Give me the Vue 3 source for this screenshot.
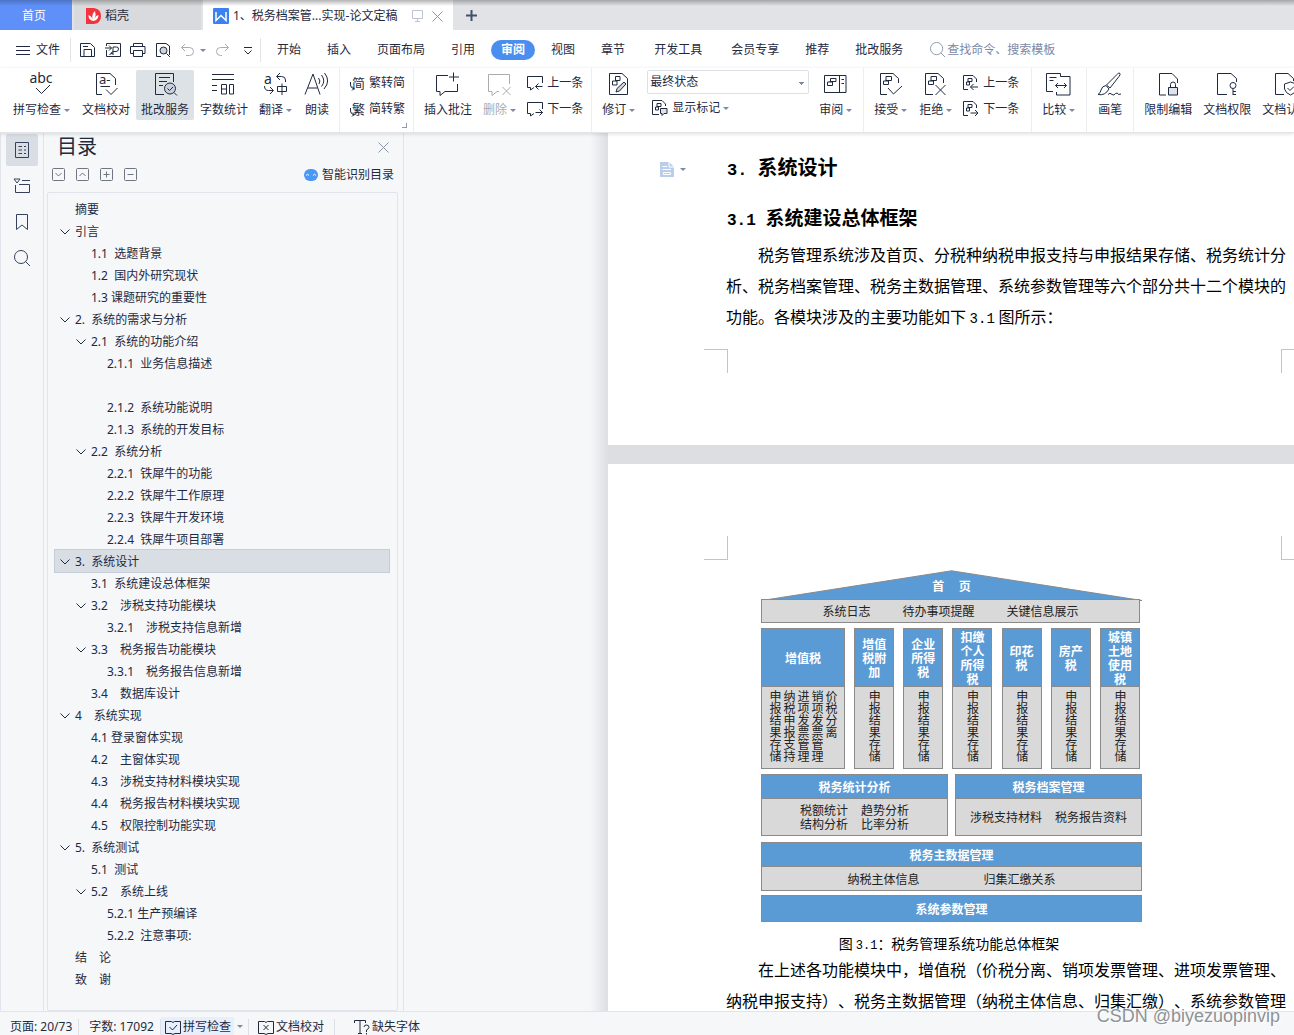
<script setup>
import { ref } from 'vue'

const doc = '<path d="M11 25H4.500V3.500H17L22.500 9V13"/>'
const pageLines = '<path d="M8.500 11.500H15.500V7.500H10.500V11.500M7.500 12H12.500V15.500H7.500Z"/>'

const icons = {
  spell: '<text x="12" y="13" text-anchor="middle" font-size="14" fill="currentColor" stroke="none">abc</text><path d="M7 18L12.500 23.500L21 15"/>',
  proof: '<path d="M9 24.500H3.500V3.500H17L22.500 8.500V15M7.500 16.500H17M13 19.500L18 24.500L24.500 18"/><text x="6" y="14" font-size="13" fill="currentColor" stroke="none">a-</text>',
  service: '<path d="M12 24.500H3.500V3.500H21.500V12M7 7.500H18M7 11.500H15M7 15.500H11"/><circle cx="18" cy="18.500" r="5.500" fill="#c9d0da"/><path d="M22 22.500L25 25.500M15.500 18.500L17.500 20.500L21 17"/>',
  count: '<path d="M1 4.500H23M1 9.500H23M1 15.500H6M1 20.500H6M10.500 14.500H15.500V24H10.500ZM10.500 19H15.500M18.500 14.500H22.500V24H18.500Z"/>',
  translate: '<text x="1" y="14" font-size="14" fill="currentColor" stroke="none">a</text><path d="M17 3L13.500 6.500L17 10M14 6.500H18.500Q22.500 6.500 22.500 10V12M1.500 16Q1.500 20.500 5.500 20.500H10M7 17L10.500 20.500L7 24M14.500 16.500H23.500V21.500H14.500ZM19 13.500V25"/>',
  read: '<path d="M1 24.500L9 4L16 24.500M4 18H13.500M14.500 8Q17 11 15 14M17.500 5Q22 11 17.500 16.500M20.500 3Q27 11 20 19"/>',
  addNote: '<path d="M13 5.500H1.500V21.500H5V25.500L10 21.500H22.500V14M18.500 2.500V11.500M14 7H24"/>',
  delNote: '<path d="M12 21.500H10L5 25.500V21.500H1.500V4.500H22.500V14M15.500 17L23.500 25M23.500 17L15.500 25"/>',
  revise: '<path d="M3.500 3.500H16L21.500 8.500V24.500H3.500Z"/><path d="M9 10.500H14V6.500H9.500V10.500M6.500 11H11V15H6.500Z"/><path d="M10 22L11 18.500L18 12L20 14L13.500 21Z" fill="#cfd3da"/>',
  review: '<path d="M1.500 5.500H23V22.500H1.500ZM16.500 5.500V22.500M6.500 11.500H13V8.500H7.500V11.500M4.500 12H9.500V15.500H4.500ZM18.500 9.500H21M18.500 13.500H21"/>',
  accept: '<path d="M9 24.500H2.500V3.500H15L20.500 8.500V13M10 18L15.500 24L24 16"/>' + '<path d="M7.500 10.500H13.500V6.500H8V10.500M5.500 11H10.500V14.500H5.500Z"/>',
  reject: '<path d="M10 24.500H2.500V3.500H15L20.500 8.500V13M12.500 15L22.500 25M22.500 15L12.500 25"/>' + '<path d="M7.500 10.500H13.500V6.500H8V10.500M5.500 11H10.500V14.500H5.500Z"/>',
  compare: '<path d="M7 21.500H.5V3.500H14.500V6.500H24V25H10.500V22M3.500 7.500H10.500M3.500 10.500H7.500M9.500 15.500H20.500M12 13L9.500 15.500L12 18M18 13L20.500 15.500L18 18"/>',
  pen: '<path d="M22.500 3Q24 4 22 6.500L13 18L9.500 15L20 4.500Q21.500 2.500 22.500 3ZM9 15.500Q5 16 4 20Q3.500 23 1 24.500Q8 26 12 19ZM11 24.500Q13 22 15 24.500Q17 26 18.500 23.500Q20.500 22 21.500 24.500L24 24"/>',
  lock: doc + '<path d="M13.500 17.500H22.500V25H13.500Z" fill="#dfe2e8"/><path d="M15.500 17V14.500Q15.500 12 18 12Q20.500 12 20.500 14.500V17"/>',
  key: '<path d="M13 24.500H3.500V3.500H17L22.500 8.500V12"/><circle cx="19" cy="15.500" r="3"/><path d="M19 18.500V25M19 21.500H22M19 24.500H22"/>',
  shield: '<path d="M11 24.500H2.500V3.500H15L20.500 8.500V11M17.500 12L23.500 14V19Q22 23.500 17.500 25Q13 23.500 11.500 19V14ZM14.500 18L17 20.500L21 16.500"/>',
  toSimple: '<text x="3" y="13" font-size="13" fill="currentColor" stroke="none">简</text><path d="M1.500 7V9Q1.500 13.500 5 13.500M3 11.500L5 13.500L3 15.500"/>',
  toTrad: '<text x="3" y="13" font-size="13" fill="currentColor" stroke="none">繁</text><path d="M1.500 7V9Q1.500 13.500 5 13.500M3 11.500L5 13.500L3 15.500"/>',
  prevNote: '<path d="M7 12.500L3.500 15V12.500H.5V1.500H15.500V8M8.500 11.500H15.500M11.500 8.500L8.500 11.500L11.500 14.500"/>',
  nextNote: '<path d="M7 12.500L3.500 15V12.500H.5V1.500H15.500V8M8.500 11.500H15.500M12.500 8.500L15.500 11.500L12.500 14.500"/>',
  prevEdit: '<path d="M5 14.500H.5V.5H10L13.500 4V7M4.500 6.500H9V3.500H5V6.500M3.500 7H6.500V10H3.500ZM7.500 12H15M10.500 9L7.500 12L10.500 15"/>',
  nextEdit: '<path d="M5 14.500H.5V.5H10L13.500 4V7M4.500 6.500H9V3.500H5V6.500M3.500 7H6.500V10H3.500ZM7.500 12H15M12 9L15 12L12 15"/>',
  marks: '<path d="M7 14.500H.5V.5H10L13.500 4V6M4.500 6.500H9V3.500H5V6.500M3.500 7H6.500V10H3.500Z"/><path d="M8.500 8.500H15V13.500H12L10 15.500V13.500H8.500Z" fill="#dfe2e8"/>',
  save: '<path d="M.5 1.500H10.500L14.500 5.500V14.500H.5ZM4 14.500V7.500H11.500V14.500M3 4.500H8"/>',
  output: '<path d="M1.500 4V1.500H15.500V14.500H1.500V8M0 6H6.500M4 3.500L6.500 6L4 8.500M4.500 12.500L8 11M8 13V5H11.500Q13.500 5 13.500 7Q13.500 9.500 11 9.500Q6 9 6 12"/>',
  print: '<path d="M3.500 4.500V1.500H12.500V4.500M3.500 11.500H.5V4.500H15V11.500H12.500M3.500 8.500H12.500V14.500H3.500Z"/>',
  preview: '<path d="M6 14.500H1.500V1.500H11L14.500 4V13"/><circle cx="8.500" cy="8.500" r="3.500" fill="#cfd3da"/><path d="M11.500 11.500L15 15"/>',
  undo: '<path d="M5 2L1.500 5.500L5 9M2 5.500H9.500Q13.500 5.500 13.500 9.500Q13.500 13.500 9.500 13.500H6"/>',
  redo: '<path d="M10 2L13.500 5.500L10 9M13 5.500H5.500Q1.500 5.500 1.500 9.500Q1.500 13.500 5.500 13.500H7"/>',
  more: '<path d="M4 5.500H12M4.500 8.500L8 12L11.500 8.500"/>',
  outline: '<path d="M1.500.5H14.500V15.500H1.500ZM4.500 4.500H8M4.500 8H8M4.500 11.500H8M10 4.500H12M10 8H12M10 11.500H12"/>',
  chapters: '<path d="M0 1H6L3 5ZM8 2.500H16M1.500 7V14.500H15.500V6.500H5"/>',
  bookmark: '<path d="M2.500.5H13.500V15.500L8 11L2.500 15.500Z"/>',
  find: '<circle cx="7" cy="7" r="6.500"/><path d="M11.500 11.500L16 16"/>',
  checkBook: '<path d="M6 14.500H.5V2.500H6.500L8 3.500L9.500 2.500H15.500V14.500H10L8 15.500ZM4.500 8L7.500 11L12 6"/>',
  crossBook: '<path d="M6 14.500H.5V2.500H6.500L8 3.500L9.500 2.500H15.500V14.500H10L8 15.500ZM5.500 6L10.500 11M10.500 6L5.500 11"/>',
  fontMissing: '<path d="M.5 4V1.500H11.500V4M6 1.500V14.500M4 14.500H8M10 8Q10 6 12.500 6Q15 6 15 8.500Q14.500 10 12.500 11V13M12.500 14V15.500"/>'
}

const quick = [['save', '保存'], ['output', '输出为PDF'], ['print', '打印'], ['preview', '打印预览']]
const menus = ['开始', '插入', '页面布局', '引用', '审阅', '视图', '章节', '开发工具', '会员专享', '推荐', '批改服务']
const activeMenu = ref('审阅')

const ribbon = [
  { big: [['spell', '拼写检查', 'c'], ['proof', '文档校对'], ['service', '批改服务', 'on'], ['count', '字数统计'], ['translate', '翻译', 'c'], ['read', '朗读']] },
  { small: [['toSimple', '繁转简'], ['toTrad', '简转繁']], corner: true },
  { big: [['addNote', '插入批注'], ['delNote', '删除', 'c off']], small: [['prevNote', '上一条'], ['nextNote', '下一条']] },
  { big: [['revise', '修订', 'c']], state: true, after: [['review', '审阅', 'c']] },
  { big: [['accept', '接受', 'c'], ['reject', '拒绝', 'c']], small: [['prevEdit', '上一条'], ['nextEdit', '下一条']], wide: true },
  { big: [['compare', '比较', 'c']] },
  { big: [['pen', '画笔']] },
  { big: [['lock', '限制编辑'], ['key', '文档权限'], ['shield', '文档认证']] }
]

const side = [['outline', '目录'], ['chapters', '章节'], ['bookmark', '书签'], ['find', '查找']]
const treeTools = [['M3.500 5L6.500 8L9.500 5', '展开'], ['M3.500 8L6.500 5L9.500 8', '收起'], ['M3.500 6.500H9.500M6.500 3.500V9.500', '放大'], ['M3.500 6.500H9.500', '缩小']]

// [level, expandable, title]
const tree = [
  [1, 0, '摘要'], [1, 1, '引言'], [2, 0, '1.1  选题背景'], [2, 0, '1.2  国内外研究现状'],
  [2, 0, '1.3 课题研究的重要性'], [1, 1, '2.  系统的需求与分析'], [2, 1, '2.1  系统的功能介绍'],
  [3, 0, '2.1.1  业务信息描述'], [3, 0, ''], [3, 0, '2.1.2  系统功能说明'], [3, 0, '2.1.3  系统的开发目标'],
  [2, 1, '2.2  系统分析'], [3, 0, '2.2.1  铁犀牛的功能'], [3, 0, '2.2.2  铁犀牛工作原理'],
  [3, 0, '2.2.3  铁犀牛开发环境'], [3, 0, '2.2.4  铁犀牛项目部署'], [1, 1, '3.  系统设计'],
  [2, 0, '3.1  系统建设总体框架'], [2, 1, '3.2　涉税支持功能模块'], [3, 0, '3.2.1　涉税支持信息新增'],
  [2, 1, '3.3　税务报告功能模块'], [3, 0, '3.3.1　税务报告信息新增'], [2, 0, '3.4　数据库设计'],
  [1, 1, '4　系统实现'], [2, 0, '4.1 登录窗体实现'], [2, 0, '4.2　主窗体实现'],
  [2, 0, '4.3　涉税支持材料模块实现'], [2, 0, '4.4　税务报告材料模块实现'], [2, 0, '4.5　权限控制功能实现'],
  [1, 1, '5.  系统测试'], [2, 0, '5.1  测试'], [2, 1, '5.2　系统上线'],
  [3, 0, '5.2.1 生产预编译'], [3, 0, '5.2.2  注意事项:'], [1, 0, '结　论'], [1, 0, '致　谢']
]
const selected = ref(16)

const stored = ['申报结果存储']
const taxes = [
  { name: ['增值税'], items: ['价税分离', '销项发票管理', '进项发票管理', '纳税申报支持', '申报结果存储'], wide: true },
  { name: ['增值', '税附', '加'], items: stored },
  { name: ['企业', '所得', '税'], items: stored },
  { name: ['扣缴', '个人', '所得', '税'], items: stored },
  { name: ['印花', '税'], items: stored },
  { name: ['房产', '税'], items: stored },
  { name: ['城镇', '土地', '使用', '税'], items: stored }
]
</script>

<template>
  <div class="app">
    <header class="tabs">
      <button class="tab home">首页</button>
      <button class="tab docer">
        <svg width="15" height="16" viewBox="0 0 15 16"><path d="M0 0H8Q15 1 15 8Q15 15 8 16H0Z" fill="#f5333f" stroke="none" /><path d="M7.500 13Q2 12 2.500 7Q5.500 8 6.500 11Q5.500 6 9 3Q10.500 7 8.500 11Q9.500 7.500 12.500 7Q12.500 12 7.500 13Z" fill="#fff" stroke="none" /></svg>
        稻壳
      </button>
      <div class="tab current">
        <svg width="16" height="16" viewBox="0 0 16 16"><rect width="16" height="16" rx="1" fill="#3b82f0" stroke="none" /><path d="M3 4V12.500L8 7.500L13 12.500V4" fill="none" stroke="#fff" stroke-width="1.500" /></svg>
        <span class="tab-title">1、税务档案管...实现-论文定稿</span>
        <svg class="faint" width="13" height="12" viewBox="0 0 13 12"><path d="M1.500.5H11.500V8.500H1.500ZM6.500 8.500V11M4 11.500H9" /></svg>
        <button class="plain" aria-label="关闭标签"><svg class="close" width="11" height="11" viewBox="0 0 11 11"><path d="M.5.5L10.500 10.500M10.500.5L.5 10.500" /></svg></button>
      </div>
      <button class="plain add" aria-label="新建标签"><svg width="13" height="13" viewBox="0 0 13 13"><path d="M6.500 1V12M1 6.500H12" stroke-width="2" /></svg></button>
    </header>

    <nav class="menu">
      <button class="plain file"><svg width="14" height="11" viewBox="0 0 14 11"><path d="M0 1.500H14M0 5.500H14M0 9.500H14" /></svg>文件</button>
      <div class="quick">
        <button v-for="q in quick" :key="q[0]" class="plain" :aria-label="q[1]"><svg width="16" height="16" viewBox="0 0 16 16" v-html="icons[q[0]]" /></button>
        <button class="plain off undo" aria-label="撤销"><svg width="16" height="16" viewBox="0 0 16 16" v-html="icons.undo" /><i class="caret" /></button>
        <button class="plain off" aria-label="恢复"><svg width="16" height="16" viewBox="0 0 16 16" v-html="icons.redo" /></button>
        <button class="plain" aria-label="更多"><svg width="16" height="16" viewBox="0 0 16 16" v-html="icons.more" /></button>
      </div>
      <div class="menu-tabs">
        <button v-for="m in menus" :key="m" class="plain menu-tab" :class="{ active: m === activeMenu, roomy: m === '开发工具' || m === '会员专享' }" @click="activeMenu = m">{{ m }}</button>
      </div>
      <label class="search">
        <svg width="16" height="16" viewBox="0 0 17 17" v-html="icons.find" />
        <input type="text" placeholder="查找命令、搜索模板" aria-label="查找命令、搜索模板" />
      </label>
    </nav>

    <div class="ribbon">
      <div v-for="(g, i) in ribbon" :key="i" class="group" :class="{ wide: g.wide }">
        <button v-for="b in g.big" :key="b[1]" class="plain big" :class="b[2]">
          <svg width="26" height="28" viewBox="0 0 26 28" v-html="icons[b[0]]" />
          <span class="label">{{ b[1] }}<i v-if="b[2] && b[2][0] === 'c'" class="caret" /></span>
        </button>
        <div v-if="g.state" class="stack state">
          <select aria-label="显示状态"><option>最终状态</option></select>
          <button class="plain small"><svg width="16" height="16" viewBox="0 0 16 16" v-html="icons.marks" />显示标记<i class="caret" /></button>
        </div>
        <div v-if="g.small" class="stack">
          <button v-for="s in g.small" :key="s[1]" class="plain small"><svg width="16" height="16" viewBox="0 0 16 16" v-html="icons[s[0]]" />{{ s[1] }}</button>
        </div>
        <button v-for="b in g.after" :key="b[1]" class="plain big">
          <svg width="26" height="28" viewBox="0 0 26 28" v-html="icons[b[0]]" />
          <span class="label">{{ b[1] }}<i class="caret" /></span>
        </button>
        <i v-if="g.corner" class="corner" />
      </div>
    </div>

    <main class="work">
      <aside class="rail">
        <button v-for="(s, i) in side" :key="s[0]" class="plain rail-btn" :class="{ on: i === 0 }" :aria-label="s[1]"><svg width="17" height="17" viewBox="0 0 17 17" v-html="icons[s[0]]" /></button>
      </aside>

      <section class="panel">
        <div class="panel-head">
          <h2>目录</h2>
          <button class="plain" aria-label="关闭目录"><svg class="close" width="11" height="11" viewBox="0 0 11 11"><path d="M.5.5L10.500 10.500M10.500.5L.5 10.500" /></svg></button>
        </div>
        <div class="panel-tools">
          <button v-for="t in treeTools" :key="t[1]" class="plain" :aria-label="t[1]"><svg width="13" height="13" viewBox="0 0 13 13"><rect x=".5" y=".5" width="12" height="12" rx="1" /><path :d="t[0]" /></svg></button>
          <button class="plain smart">
            <svg width="14" height="12" viewBox="0 0 14 12"><rect width="14" height="12" rx="6" fill="#4a97f5" stroke="none" /><path d="M2 6.500Q3.500 4 5 6.500M9 6.500Q10.500 4 12 6.500" stroke="#fff" /></svg>智能识别目录
          </button>
        </div>
        <ul class="tree">
          <li v-for="(n, i) in tree" :key="i">
            <button class="plain node" :class="['l' + n[0], { on: i === selected }]" :aria-label="n[2] || '空标题'" @click="selected = i">
              <span class="twist"><svg v-if="n[1]" width="10" height="6" viewBox="0 0 10 6"><path d="M.5.5L5 5L9.500.5" /></svg></span>{{ n[2] }}
            </button>
          </li>
        </ul>
      </section>

      <div class="canvas">
        <article class="page first">
          <div class="heading-row">
            <button class="plain para" aria-label="段落样式">
              <svg width="14" height="15" viewBox="0 0 14 15"><path d="M0 0H9L14 5V15H0Z" fill="#b9cdec" stroke="none" /><path d="M9 0V5H14M2.500 4.500H7M2.500 7.500H11M3.500 10.500H10.500V12.500H3.500Z" stroke="#fff" /></svg><i class="caret" />
            </button>
            <h2><span class="num">3. </span>系统设计</h2>
          </div>
          <h3><span class="num">3.1 </span>系统建设总体框架</h3>
          <p class="body indent">税务管理系统涉及首页、分税种纳税申报支持与申报结果存储、税务统计分</p>
          <p class="body">析、税务档案管理、税务主数据管理、系统参数管理等六个部分共十二个模块的</p>
          <p class="body">功能。各模块涉及的主要功能如下 <span class="num">3.1</span> 图所示：</p>
          <div class="crops bottom"><i /><i /></div>
        </article>

        <article class="page second">
          <div class="crops top"><i /><i /></div>
          <figure>
            <div class="roof">
              <svg width="382" height="31" viewBox="0 0 382 31"><path d="M1 30.500L190.500 .8L381 30.500Z" fill="#5b9bd5" stroke="#8a8a8a" /></svg>
              <strong>首　   页</strong>
            </div>
            <div class="cell gray eaves"><span>系统日志</span><span>待办事项提醒</span><span>关键信息展示</span></div>
            <div class="pillars">
              <div v-for="(t, i) in taxes" :key="i" class="pillar" :class="{ wide: t.wide }">
                <div class="cell blue tax"><span v-for="w in t.name" :key="w">{{ w }}</span></div>
                <div class="cell gray vertical"><span v-for="w in t.items" :key="w">{{ w }}</span></div>
              </div>
            </div>
            <div class="pair">
              <div class="block">
                <div class="cell blue">税务统计分析</div>
                <div class="cell gray quad"><span>税额统计</span><span>趋势分析</span><span>结构分析</span><span>比率分析</span></div>
              </div>
              <div class="block">
                <div class="cell blue">税务档案管理</div>
                <div class="cell gray duo"><span>涉税支持材料</span><span>税务报告资料</span></div>
              </div>
            </div>
            <div class="block master">
              <div class="cell blue">税务主数据管理</div>
              <div class="cell gray"><span>纳税主体信息</span><span>归集汇缴关系</span></div>
            </div>
            <div class="cell blue params">系统参数管理</div>
            <figcaption>图 <span class="num">3.1</span>：税务管理系统功能总体框架</figcaption>
          </figure>
          <p class="body indent">在上述各功能模块中，增值税（价税分离、销项发票管理、进项发票管理、</p>
          <p class="body">纳税申报支持）、税务主数据管理（纳税主体信息、归集汇缴）、系统参数管理</p>
        </article>
      </div>
    </main>

    <footer class="status">
      <span class="stat">页面: 20/73</span>
      <span class="stat">字数: 17092</span>
      <span class="stat checks"><button class="plain lit"><svg width="16" height="16" viewBox="0 0 16 16" v-html="icons.checkBook" />拼写检查</button><i class="caret" /></span>
      <span class="stat"><button class="plain"><svg width="16" height="16" viewBox="0 0 16 16" v-html="icons.crossBook" />文档校对</button></span>
      <button class="plain fonts"><svg width="16" height="16" viewBox="0 0 16 16" v-html="icons.fontMissing" />缺失字体</button>
      <span class="watermark">CSDN @biyezuopinvip</span>
    </footer>
  </div>
</template>

<style>
body { margin: 0; }
</style>

<style scoped>
* { box-sizing: border-box; }
.app { display: flex; flex-direction: column; height: 100vh; overflow: hidden; font: 12px/16px "Noto Sans", "Noto Sans CJK SC", sans-serif; color: #1f2a3f; background: #fff; }
svg { display: block; flex: none; fill: none; stroke: currentColor; overflow: visible; }
button, input, select { font: inherit; color: inherit; }
.plain { display: flex; align-items: center; padding: 0; border: 0; background: none; white-space: nowrap; }
.caret { width: 0; height: 0; border: 3px solid transparent; border-top-color: #7d8aa3; border-bottom-width: 0; flex: none; }
.off { color: #a9abb0; }
.close { color: #8a94a6; }

.tabs { display: flex; flex: none; height: 30px; background: linear-gradient(#a4a6a9, #e1e3e7 6px); gap: 2px; }
.tab { display: flex; align-items: center; border: 0; }
.home { width: 72px; justify-content: center; padding: 2px 4px 0 0; color: #fff; background: linear-gradient(#4c74c4, #5f8ff9 6px); }
.docer { width: 127px; gap: 4px; padding: 2px 12px 0; background: linear-gradient(#a0a2a4, #d8dadd 6px); }
.current { width: 250px; gap: 4px; padding: 2px 10px 0; background: linear-gradient(#b4b4b4, #fff 6px); }
.tab-title { flex: 1; white-space: nowrap; }
.faint { color: #bcc3d2; margin-right: 4px; }
.add { margin-left: 10px; color: #44516c; }

.menu { display: flex; flex: none; align-items: center; height: 38px; padding-top: 2px; }
.file { gap: 6px; height: 24px; padding: 0 10px 0 16px; border-right: 1px solid #e1e4e8; }
.quick { display: flex; gap: 9px; height: 24px; padding: 0 4px 0 9px; border-right: 1px solid #e1e4e8; }
.undo { gap: 4px; }
.menu-tabs { display: flex; padding-left: 3px; }
.menu-tab { height: 20px; padding: 0 13px; }
.menu-tab.active { padding: 0 10px; margin: 0 3px; border-radius: 10px; color: #fff; font-weight: 700; background: #4a8ff0; }
.roomy { margin-left: 3px; }
.search { display: flex; align-items: center; gap: 1px; margin-left: 14px; color: #8d98ae; }
.search input { width: 160px; padding: 0; border: 0; background: none; outline: 0; }
.search input::placeholder { color: #7c88a3; opacity: 1; }

.ribbon { display: flex; flex: none; height: 65px; border-bottom: 1px solid #e3e5e8; box-shadow: 0 1px 4px #0002; z-index: 1; background: #fff; overflow: hidden; }
.group { position: relative; display: flex; flex: none; gap: 1px; padding: 2px 5px 0; border-right: 1px solid #eceef1; }
.group:first-child { padding: 2px 4px 0 8px; }
.group.wide { padding-right: 9px; }
.big { flex-direction: column; height: 50px; padding: 0 5px; border-radius: 2px; }
.big.on { background: #dde2e7; }
.label { display: flex; align-items: center; margin-top: 4px; line-height: 16px; }
.label .caret { margin: 0 1px 0 3px; }
.stack { display: flex; flex-direction: column; gap: 10px; padding: 5px 3px 0 4px; }
.small { gap: 4px; height: 16px; }
.small .caret { margin-left: -1px; }
.state { gap: 6px; padding: 0 4px 0 5px; }
.state .small { padding-left: 5px; }
.state select { width: 162px; height: 24px; padding: 0 6px 0 2px; border: 1px solid #dcdfe4; border-radius: 2px; appearance: none; background: linear-gradient(#7d8aa3, #7d8aa3) no-repeat right 4px top 11px / 5px 1px, linear-gradient(#7d8aa3, #7d8aa3) no-repeat right 5px top 12px / 3px 1px, linear-gradient(#7d8aa3, #7d8aa3) no-repeat right 6px top 13px / 1px 1px, #fff; }
.corner { position: absolute; right: 6px; bottom: 4px; width: 5px; height: 5px; border: solid #8d98ae; border-width: 0 1px 1px 0; }

.work { display: flex; flex: 1; min-height: 0; background: #f5f7f9; }
.rail { display: flex; flex-direction: column; flex: none; gap: 4px; width: 44px; padding: 1px 5px 0; border: solid #e1e4ea; border-width: 0 1px; color: #35415c; }
.rail-btn { justify-content: center; width: 32px; height: 32px; border-radius: 2px; }
.rail-btn.on { background: #d9dee5; }
.panel { display: flex; flex-direction: column; flex: none; width: 360px; padding: 0 5px 0 3px; border-right: 1px solid #e1e4ea; }
.panel-head { display: flex; align-items: center; justify-content: space-between; height: 28px; padding: 0 9px 0 10px; }
.panel-head h2 { margin: 0; font-size: 20px; line-height: 28px; font-weight: 400; }
.panel-tools { display: flex; align-items: center; gap: 11px; height: 31px; padding: 0 4px 4px 5px; color: #6f7681; }
.smart { gap: 4px; margin-left: auto; color: #1f2a3f; }
.tree { flex: 1; min-height: 0; margin: 0; padding: 5px 8px 0 7px; overflow: hidden; list-style: none; border: 1px solid #e1e4ea; border-radius: 2px; }
.node { width: 100%; height: 22px; padding-top: 2px; text-align: left; white-space: pre; outline: 1px solid transparent; }
.node.on { background: #d9dee5; outline-color: #c5cdd9; }
.twist { width: 15px; flex: none; }
.l1 { padding-left: 5px; }
.l2 { padding-left: 21px; }
.l3 { padding-left: 37px; }

.canvas { flex: 1; min-width: 0; padding-left: 204px; overflow: hidden; background: linear-gradient(90deg, #f5f7f9 186px, #dcdee1 204px); }
.page { background: #fff; color: #000; font-family: "Noto Sans CJK SC", sans-serif; overflow: hidden; }
.num { font-family: "Liberation Mono", monospace; white-space: pre; }
.first { height: 312px; margin-bottom: 19px; padding-top: 19px; }
.second { height: 560px; padding-top: 72px; }
.heading-row { display: flex; align-items: center; padding-left: 52px; }
.para { gap: 6px; width: 67px; }
.heading-row h2 { margin: 0; font-size: 20px; line-height: 30px; }
.heading-row .num { font-size: 17px; }
.page h3 { margin: 17px 0 4px 119px; font-size: 19px; line-height: 28px; }
.page h3 .num { font-size: 16px; }
.body { margin: 0 0 0 118px; font-size: 16px; line-height: 31px; white-space: nowrap; text-spacing-trim: space-all; }
.body.indent { text-indent: 32px; }
.body .num { font-size: 14px; }
.crops { display: flex; justify-content: space-between; padding-left: 96px; }
.crops i { width: 24px; height: 24px; border: 0 solid #c4c4c4; }
.crops i:first-child { border-right-width: 1px; }
.crops i:last-child { width: 13px; border-left-width: 1px; }
.bottom { margin-top: 14px; }
.bottom i { border-top-width: 1px; }
.top i { border-bottom-width: 1px; }

figure { width: 381px; margin: 10px 0 0 153px; line-height: 14px; }
.roof { position: relative; height: 29px; text-align: center; color: #fff; }
.roof svg { position: absolute; }
.roof strong { position: relative; line-height: 32px; white-space: pre; }
.cell { display: flex; align-items: center; justify-content: center; border: 1px solid #8a8a8a; }
.blue { height: 25px; color: #fff; font-weight: 700; background: #5b9bd5; }
.gray { color: #222; background: #d9d9d9; margin-top: -1px; }
.eaves { position: relative; gap: 32px; height: 24px; margin: 0 2px 0 0; }
.pillars { display: flex; justify-content: space-between; margin: 5px 2px 5px 0; }
.pillar { width: 40px; }
.pillar.wide { width: 84px; }
.tax { flex-direction: column; height: 59px; }
.vertical { align-items: flex-start; height: 83px; padding-top: 3px; flex-direction: row-reverse; line-height: 14px; }
.vertical span { writing-mode: vertical-rl; }
.pair { display: flex; gap: 7px; margin-bottom: 6px; }
.block { flex: 1; }
.quad { display: grid; grid-template-columns: auto auto; align-content: center; gap: 0 13px; height: 38px; }
.duo { gap: 13px; height: 38px; }
.master .gray { gap: 64px; height: 25px; }
.params { height: 27px; margin-top: 4px; }
figcaption { padding-right: 5px; margin-top: 13px; font-size: 14px; line-height: 16px; text-align: center; }
figcaption .num { font-size: 12px; }

.status { position: relative; display: flex; flex: none; align-items: center; height: 24px; padding-top: 6px; border-top: 1px solid #e1e4ea; background: #f5f7f9; }
.stat { display: flex; align-items: center; height: 16px; padding: 0 6px 0 10px; border-right: 1px solid #dcdfe5; white-space: nowrap; }
.stat .plain, .fonts { gap: 2px; }
.checks { gap: 3px; padding: 0 5px 0 0; }
.lit { height: 20px; padding: 0 3px 0 4px; background: #e6effb; }
.stat:nth-child(4) { padding: 0 10px 0 9px; }
.fonts { margin-left: 19px; }
.watermark { position: absolute; right: 14px; bottom: 9px; font: 18px/20px "Liberation Sans", sans-serif; color: #8f9296; text-shadow: 1px 1px #fff; }
</style>
